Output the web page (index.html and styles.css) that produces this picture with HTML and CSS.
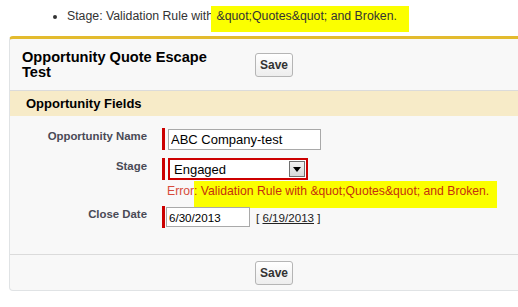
FILE: index.html
```html
<!DOCTYPE html>
<html lang="en">
<head>
  <meta charset="UTF-8">
  <title>Opportunity Quote Escape Test</title>
  <link rel="stylesheet" href="styles.css">
</head>
<body>
  <!-- Page messages -->
  <ul class="messages">
    <li>Stage: Validation Rule with <span class="marker marker-top">&amp;quot;Quotes&amp;quot; and Broken.</span></li>
  </ul>

  <div class="block">
    <div class="block-row block-head">
      <h2 class="block-title">Opportunity Quote Escape Test</h2>
      <button class="btn">Save</button>
    </div>

    <div class="section-title">Opportunity Fields</div>

    <div class="fields">
      <div class="label">Opportunity Name</div>
      <div class="data">
        <div class="required"><input class="text-input name-input" value="ABC Company-test"></div>
      </div>

      <div class="label">Stage</div>
      <div class="data">
        <div class="required">
          <div class="select error-box">
            <span class="select-value">Engaged</span>
            <span class="select-arrow"><svg width="8" height="5" viewBox="0 0 8 5"><path d="M0 0h8L4 5z" fill="#000"/></svg></span>
          </div>
        </div>
        <div class="error-msg">Error<span class="marker marker-error">: Validation Rule with &amp;quot;Quotes&amp;quot; and Broken.</span></div>
      </div>

      <div class="label">Close Date</div>
      <div class="data">
        <div class="required required-date">
          <input class="text-input date-input" value="6/30/2013">
          <span class="date-link">[ <a href="#">6/19/2013</a> ]</span>
        </div>
      </div>
    </div>

    <div class="block-row block-foot">
      <div class="block-title"></div>
      <button class="btn">Save</button>
    </div>
  </div>
</body>
</html>
```

FILE: styles.css
```css
/* ====== Base ====== */
body{margin:0;font-family:'Liberation Sans',Arial,sans-serif;font-size:13px;color:#333;background:#fff;overflow:hidden}

/* ====== Messages ====== */
.messages{margin:8px 0 12px;padding:0 0 0 67px;line-height:16px;font-size:12.3px}
.marker{background:#fbff00}
.marker-top{padding:3px 12px 9px 5px;margin-left:-5px}

/* ====== Page block ====== */
.block{margin:0 -12px 0 9px;background:#f8f8f8;border:1px solid #e0e3e5;border-top:3px solid #e3bb2e;border-radius:4px 0 0 4px}
.block-row{display:flex;align-items:center;padding:0 12px}
.block-head{padding-top:11px;padding-bottom:10px;border-bottom:1px solid #dbdbdb}
.block-title{width:200px;margin:0 33px 0 0;font-size:14.6px;line-height:15px;font-weight:bold;color:#000}
.block-foot{padding-top:6px;padding-bottom:5px;border-top:1px solid #dbdbdb}

.btn{height:24px;padding:0 4px;font-family:inherit;font-size:12px;font-weight:bold;color:#333;background:linear-gradient(#fff,#ededed);border:1px solid #b5b5b5;border-radius:3px}

.section-title{background:#f7ebc8;padding:5px 16px 5px;font-size:13px;font-weight:bold;color:#000;line-height:15px}

/* ====== Fields ====== */
.fields{display:grid;grid-template-columns:137px 1fr;column-gap:15px;row-gap:8px;padding:12px 0 26px}
.label{text-align:right;font-size:11.4px;font-weight:bold;color:#4a4a56;line-height:14px;padding-top:1px}
.required{display:flex;align-items:center;border-left:3px solid #c00;padding-left:3px;height:22px}
.required-date{padding-left:1px}

.text-input{box-sizing:border-box;height:21px;padding:0 2px;font-family:inherit;font-size:13px;color:#000;background:#fff;border:1px solid #a9a9a9}
.name-input{width:153px}
.date-input{width:84px;height:20px;font-size:11.6px}
.date-link{margin-left:6px;font-size:11.6px;color:#222}
.date-link a{color:#222}

.select{box-sizing:border-box;width:140px;height:22px;display:flex;align-items:center;background:#fff;border:2px solid #c00}
.select-value{flex:1;padding-left:4px;font-size:13px;color:#000}
.select-arrow{width:16px;height:16px;margin-right:1px;display:flex;align-items:center;justify-content:center;background:linear-gradient(#f2f2f2,#d8d8d8);border:1px solid #707070;box-sizing:border-box}

.error-msg{margin-top:4px;padding-left:5px;color:#d74c3b;font-size:12.2px;line-height:14px}
.marker-error{padding:3px 8px 10px 0;color:#c5300e}
```
